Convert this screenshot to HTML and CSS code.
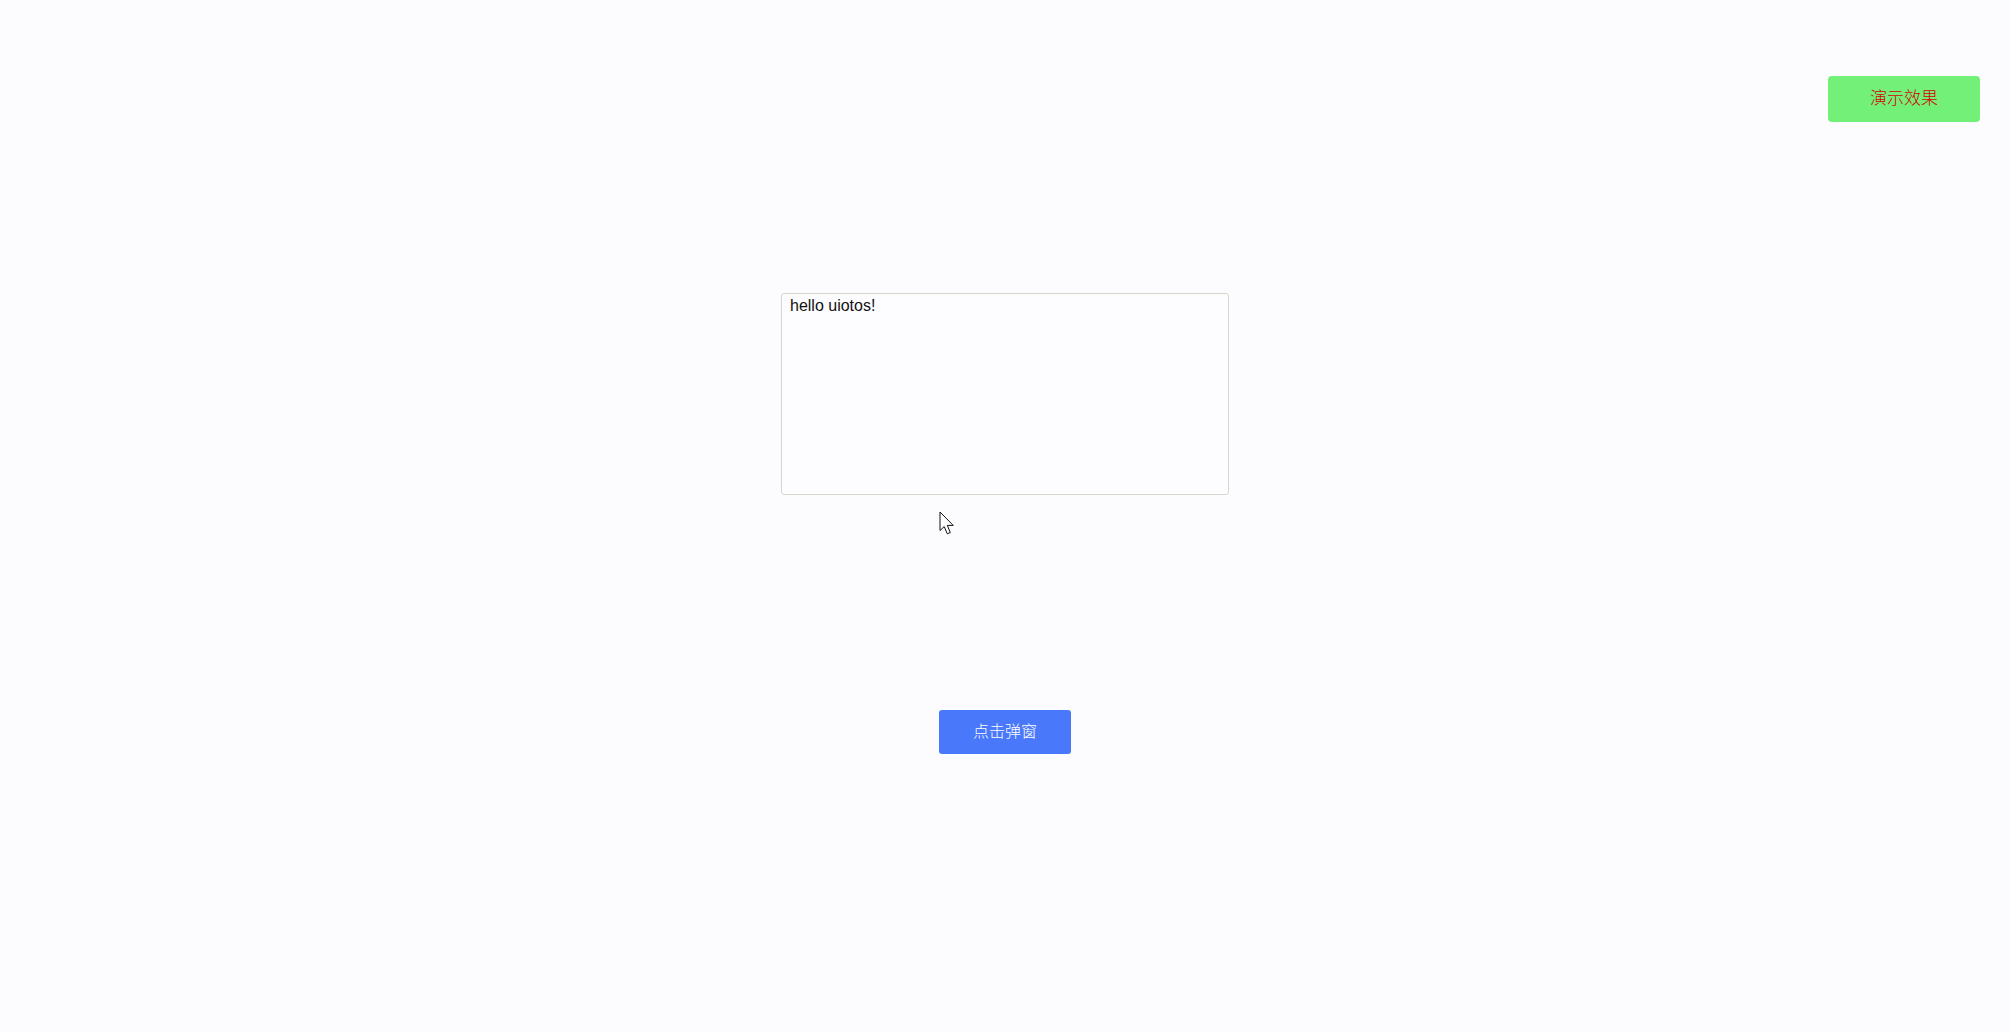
FILE: index.html
```html
<!DOCTYPE html>
<html lang="zh-CN">
<head>
<meta charset="utf-8">
<title>演示效果</title>
<link rel="stylesheet" href="styles.css">
</head>
<body>
<div class="page">
  <header class="topbar">
    <button class="demo-btn" type="button">演示效果</button>
  </header>
  <main class="stage">
    <div class="editor-wrap">
      <textarea class="editor">hello uiotos!</textarea>
      <svg class="pointer" width="18" height="26" viewBox="0 0 18 26" aria-hidden="true">
        <path d="M1 1 L1 19.5 L5.2 15.6 L8.3 22.8 L11.3 21.5 L8.3 14.4 L14.2 14.4 Z" fill="#ffffff" stroke="#111111" stroke-width="1" stroke-linejoin="miter"/>
      </svg>
    </div>
    <button class="popup-btn" type="button">点击弹窗</button>
  </main>
</div>
</body>
</html>
```

FILE: styles.css
```css
html, body {
  margin: 0;
  padding: 0;
  background: #fcfcfe;
}

.page {
  width: 2010px;
  height: 1032px;
  font-family: "Liberation Sans", Arial, "Noto Sans CJK SC", sans-serif;
}

.topbar {
  display: flex;
  justify-content: flex-end;
  padding: 76px 30px 0 0;
}

.demo-btn {
  box-sizing: border-box;
  width: 152px;
  height: 46px;
  border: none;
  border-radius: 4px;
  background: #72f078;
  color: #d40000;
  font-family: "Noto Sans CJK SC", sans-serif;
  font-weight: 300;
  font-size: 17px;
  line-height: 20px;
  padding: 0 0 4px 0;
  cursor: pointer;
}

.stage {
  display: flex;
  flex-direction: column;
  align-items: center;
  padding-top: 171px;
}

.editor-wrap {
  position: relative;
}

.editor {
  display: block;
  box-sizing: border-box;
  width: 448px;
  height: 202px;
  margin: 0;
  padding: 3px 8px;
  border: 1px solid #d6d6cc;
  border-radius: 3px;
  background: #fdfdff;
  color: #111111;
  font-family: "Liberation Sans", Arial, sans-serif;
  font-size: 16px;
  line-height: 18px;
  resize: none;
  outline: none;
}

.pointer {
  position: absolute;
  left: 158px;
  top: 218px;
}

.popup-btn {
  box-sizing: border-box;
  margin-top: 215px;
  width: 132px;
  height: 44px;
  border: none;
  border-radius: 3px;
  background: #4a78fa;
  color: #ffffff;
  font-family: "Noto Sans CJK SC", sans-serif;
  font-weight: 300;
  font-size: 16px;
  line-height: 20px;
  padding: 0 0 4px 0;
  cursor: pointer;
}
```
